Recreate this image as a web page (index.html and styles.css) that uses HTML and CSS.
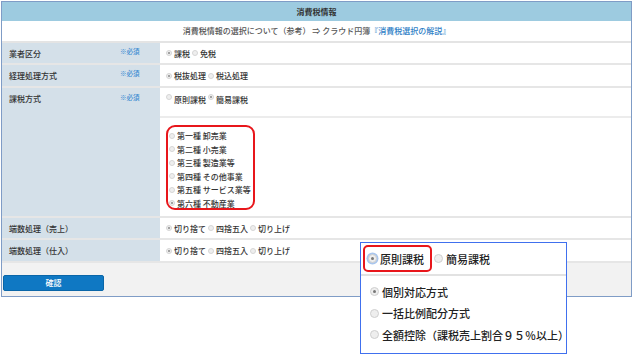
FILE: index.html
```html
<!DOCTYPE html>
<html lang="ja">
<head>
<meta charset="utf-8">
<link rel="stylesheet" href="styles.css">
</head>
<body>
<div class="frame">
  <div class="title">消費税情報</div>
  <div class="sub">消費税情報の選択について（参考） ⇒ クラウド円簿<span class="link">『消費税選択の解説』</span></div>

  <div class="row h22">
    <div class="label"><span>業者区分</span><span class="req">※必須</span></div>
    <div class="cell"><span class="radio on"></span>課税<span class="radio"></span>免税</div>
  </div>
  <div class="row h23">
    <div class="label"><span>経理処理方式</span><span class="req">※必須</span></div>
    <div class="cell"><span class="radio on"></span>税抜処理<span class="radio"></span>税込処理</div>
  </div>
  <div class="row tall">
    <div class="label top"><span>課税方式</span><span class="req">※必須</span></div>
    <div class="cell stack">
      <div class="upper"><span class="radio"></span>原則課税<span class="radio on"></span>簡易課税</div>
      <div class="lower">
        <div class="redbox">
          <div class="item"><span class="radio"></span>第一種 卸売業</div>
          <div class="item"><span class="radio"></span>第二種 小売業</div>
          <div class="item"><span class="radio"></span>第三種 製造業等</div>
          <div class="item"><span class="radio"></span>第四種 その他事業</div>
          <div class="item"><span class="radio"></span>第五種 サービス業等</div>
          <div class="item"><span class="radio on"></span>第六種 不動産業</div>
        </div>
      </div>
    </div>
  </div>
  <div class="row h22">
    <div class="label"><span>端数処理（売上）</span></div>
    <div class="cell"><span class="radio on"></span>切り捨て<span class="radio"></span>四捨五入<span class="radio"></span>切り上げ</div>
  </div>
  <div class="row h23">
    <div class="label"><span>端数処理（仕入）</span></div>
    <div class="cell"><span class="radio on"></span>切り捨て<span class="radio"></span>四捨五入<span class="radio"></span>切り上げ</div>
  </div>
  <div class="footer">
    <button class="btn">確認</button>
  </div>
</div>

<div class="popup">
  <div class="ptop">
    <div class="redsel"><span class="pradio on focus"></span>原則課税</div>
    <span class="pradio"></span>簡易課税
  </div>
  <div class="plist">
    <div class="pitem"><span class="pradio on"></span>個別対応方式</div>
    <div class="pitem"><span class="pradio"></span>一括比例配分方式</div>
    <div class="pitem"><span class="pradio"></span>全額控除（課税売上割合９５％以上）</div>
  </div>
</div>
</body>
</html>
```

FILE: styles.css
```css
* { box-sizing: border-box; }
html, body { margin: 0; padding: 0; background: #fff; }
body {
  width: 632px;
  height: 355px;
  position: relative;
  overflow: hidden;
  font-family: "Noto Sans CJK JP", "Noto Sans", sans-serif;
  font-weight: 500;
  color: #333;
}
.frame {
  margin: 1px 0 0 1px;
  width: 631px;
  border: 1px solid #7f9cc6;
  background: #fff;
}
.title {
  height: 19px;
  background: #9dcbe0;
  font-size: 8px;
  font-weight: bold;
  text-align: center;
  line-height: 19px;
  color: #333;
}
.sub {
  height: 22px;
  border-bottom: 2px solid #e4e4e4;
  font-size: 8px;
  line-height: 20px;
  text-align: center;
  color: #555;
}
.link { color: #2f80c6; }
.row {
  display: grid;
  grid-template-columns: 158px 1fr;
  border-bottom: 2px solid #e6e6e6;
  font-size: 8px;
}
.h22 { height: 22px; }
.h23 { height: 23px; }
.tall { height: 130px; }
.label {
  background: #d4e0e9;
  display: flex;
  align-items: center;
  padding-left: 7px;
  position: relative;
  color: #333;
}
.label.top { align-items: flex-start; padding-top: 5px; }
.req {
  position: absolute;
  left: 118px;
  top: 3px;
  font-size: 6.5px;
  color: #3a8bd2;
}
.label.top .req { top: 4px; }
.cell {
  display: flex;
  align-items: center;
  padding-left: 6px;
  color: #333;
}
.cell.stack { flex-direction: column; align-items: stretch; padding-left: 0; }
.upper {
  height: 30px;
  display: flex;
  align-items: flex-start;
  padding: 6px 0 0 6px;
  border-bottom: 2px solid #ececec;
}
.lower { padding: 7px 0 0 6px; }
.redbox {
  width: 89px;
  height: 85px;
  border: 2px solid #e8161b;
  border-radius: 9px;
  padding: 2px 0 0 1px;
}
.item {
  height: 13.5px;
  display: flex;
  align-items: center;
}
.radio {
  width: 6px;
  height: 6px;
  border-radius: 50%;
  border: 1px solid #d6d6d6;
  background: #eee;
  margin-right: 2px;
  margin-left: 2px;
  position: relative;
  flex: none;
}
.cell > .radio:first-child, .upper > .radio:first-child, .item .radio { margin-left: 0; }
.radio.on::after {
  content: "";
  position: absolute;
  left: 1px; top: 1px;
  width: 2px; height: 2px;
  border-radius: 50%;
  background: #888;
}
.footer {
  height: 33px;
  background: #f2f2f2;
  padding: 12px 0 0 1px;
}
.btn {
  display: block;
  width: 101px;
  height: 16px;
  border: 1px solid #0a66a8;
  border-radius: 2px;
  background: #0f78c3;
  color: #fff;
  font-family: inherit;
  font-weight: 500;
  font-size: 8px;
  padding: 0;
  line-height: 14px;
}
.popup {
  position: absolute;
  left: 360px;
  top: 242px;
  width: 207px;
  height: 112px;
  border: 1.5px solid #4070ee;
  background: #fff;
  font-size: 11px;
  color: #222;
}
.ptop {
  height: 33px;
  display: flex;
  align-items: center;
  padding-left: 2px;
  border-bottom: 2px solid #e2e2e2;
}
.redsel {
  display: flex;
  align-items: center;
  width: 69px;
  height: 27px;
  border: 2px solid #e8161b;
  border-radius: 5px;
  padding-left: 3px;
  margin-right: 2px;
}
.pradio {
  width: 9px;
  height: 9px;
  border-radius: 50%;
  border: 1px solid #cfcfcf;
  background: #eee;
  margin-right: 3px;
  position: relative;
  flex: none;
}
.pradio.on::after {
  content: "";
  position: absolute;
  left: 2px; top: 2px;
  width: 3px; height: 3px;
  border-radius: 50%;
  background: #777;
}
.pradio.focus { box-shadow: 0 0 0 1.5px #a9c6ee; }
.plist { padding: 5px 0 0 9px; }
.pitem {
  height: 21.5px;
  display: flex;
  align-items: center;
}
```
